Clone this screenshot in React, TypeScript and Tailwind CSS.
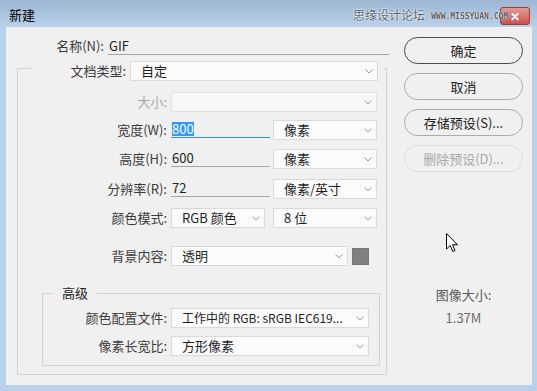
import React from "react";

const FONT = { fontFamily: '"Noto Sans CJK SC", "Noto Sans", sans-serif' };

function Chevron() {
  return (
    <svg width="8" height="5" viewBox="0 0 8 5" className="shrink-0">
      <polyline points="0.5,0.5 4,4 7.5,0.5" fill="none" stroke="#9a9a9a" strokeWidth="1" />
    </svg>
  );
}

function Sel({
  w,
  children,
  disabled,
  tight,
}: {
  w: string;
  children?: React.ReactNode;
  disabled?: boolean;
  tight?: boolean;
}) {
  return (
    <div
      className={`${w} h-[20px] shrink-0 flex items-center justify-between pl-[10px] pr-[4px] border ${
        disabled ? "border-[#e3e3e3] bg-[#f7f7f7]" : "border-[#dadada] bg-[#fbfbfb]"
      } ${tight ? "text-[12px]" : "text-[13px]"} text-[#1e1e1e] leading-[18px] whitespace-nowrap`}
    >
      <span className="whitespace-nowrap leading-[18px]">{children}</span>
      <Chevron />
    </div>
  );
}

function Label({ w, children, disabled }: { w: string; children: React.ReactNode; disabled?: boolean }) {
  return (
    <div
      className={`${w} shrink-0 text-right text-[13px] leading-[20px] whitespace-nowrap ${
        disabled ? "text-[#a8a8a8]" : "text-[#3c3c3c]"
      }`}
    >
      {children}
    </div>
  );
}

function Input({ w, value, focused }: { w: string; value: string; focused?: boolean }) {
  return (
    <div
      className={`${w} h-[18px] shrink-0 border-b ${
        focused ? "border-[#3c8be0]" : "border-[#a5a5a5]"
      } flex items-center pl-[1px] text-[13px] leading-[17px] text-[#1e1e1e]`}
    >
      {focused ? <span className="bg-[#3399ff] text-white leading-[14px]">{value}</span> : <span>{value}</span>}
    </div>
  );
}

function Btn({ children, primary, disabled }: { children: React.ReactNode; primary?: boolean; disabled?: boolean }) {
  return (
    <div
      className={`w-[119px] h-[27px] rounded-full border flex items-center justify-center text-[13px] whitespace-nowrap ${
        primary
          ? "border-[#4a4a4a] text-[#1e1e1e]"
          : disabled
          ? "border-[#dcdcdc] text-[#a8a8a8]"
          : "border-[#ababab] text-[#1e1e1e]"
      }`}
    >
      {children}
    </div>
  );
}

export default function App() {
  return (
    <div className="w-[537px] h-[391px] bg-[#b9d1ea] relative overflow-hidden" style={FONT}>
      {/* title bar */}
      <div className="h-[27px] flex items-center justify-between bg-gradient-to-b from-[#9db7d4] to-[#b8d0e9] pl-[9px] pr-[7px]">
        <div className="text-[13px] text-black pt-[3px]">新建</div>
        <div className="w-[30px] h-[18px] mt-[5px] rounded-[3px] border border-[#9b3b3b] bg-gradient-to-b from-[#e29b96] to-[#c8514d] flex items-center justify-center text-white text-[12px] font-bold leading-none">
          ✕
        </div>
      </div>
      {/* watermark overlay */}
      <div className="absolute left-[353px] top-[7px] flex items-center gap-[6px] pointer-events-none whitespace-nowrap">
        <span className="text-[12px] leading-[16px] text-[#5a6470]" style={{ textShadow: "0 0 2px #fff, 0 0 2px #fff" }}>
          思缘设计论坛
        </span>
        <span
          className="text-[8px] leading-[10px] font-bold text-[#5a5a5a] mt-[3px]"
          style={{ fontFamily: '"DejaVu Sans Mono", monospace', textShadow: "0 0 1px #fff, 0 0 1px #fff" }}
        >
          WWW.MISSYUAN.COM
        </span>
      </div>

      {/* client */}
      <div className="ml-[6px] w-[526px] h-[358px] bg-[#f0f0f0] flex">
        {/* left column */}
        <div className="w-[381px] shrink-0 flex flex-col">
          {/* name row */}
          <div className="mt-[9px] flex items-center">
            <Label w="w-[98px]">名称(N):</Label>
            <div className="ml-[4px]">
              <Input w="w-[281px]" value="GIF" />
            </div>
          </div>

          {/* outer group box */}
          <div className="ml-[11px] mt-[12px] w-[370px] h-[307px] border border-[#d3d3d3] flex flex-col">
            {/* header (doc type) */}
            <div className="-mt-[8px] ml-[13px] mr-[2px] h-[20px] bg-[#f0f0f0] flex items-center">
              <Label w="w-[95px]">文档类型:</Label>
              <div className="ml-[4px]">
                <Sel w="w-[248px]">自定</Sel>
              </div>
            </div>

            {/* size */}
            <div className="mt-[11px] flex items-start">
              <Label w="w-[149px]" disabled>
                大小:
              </Label>
              <div className="ml-[4px]">
                <Sel w="w-[206px]" disabled />
              </div>
            </div>

            {/* width */}
            <div className="mt-[8px] flex items-start">
              <Label w="w-[149px]">宽度(W):</Label>
              <div className="ml-[4px] flex">
                <Input w="w-[99px]" value="800" focused />
                <div className="ml-[3px]">
                  <Sel w="w-[104px]">像素</Sel>
                </div>
              </div>
            </div>

            {/* height */}
            <div className="mt-[9px] flex items-start">
              <Label w="w-[149px]">高度(H):</Label>
              <div className="ml-[4px] flex">
                <Input w="w-[99px]" value="600" />
                <div className="ml-[3px]">
                  <Sel w="w-[104px]">像素</Sel>
                </div>
              </div>
            </div>

            {/* resolution */}
            <div className="mt-[10px] flex items-start">
              <Label w="w-[149px]">分辨率(R):</Label>
              <div className="ml-[4px] flex">
                <Input w="w-[99px]" value="72" />
                <div className="ml-[3px]">
                  <Sel w="w-[104px]">像素/英寸</Sel>
                </div>
              </div>
            </div>

            {/* color mode */}
            <div className="mt-[9px] flex items-start">
              <Label w="w-[149px]">颜色模式:</Label>
              <div className="ml-[4px] flex">
                <Sel w="w-[94px]">RGB 颜色</Sel>
                <div className="ml-[8px]">
                  <Sel w="w-[104px]">8 位</Sel>
                </div>
              </div>
            </div>

            {/* background */}
            <div className="mt-[18px] flex items-start">
              <Label w="w-[149px]">背景内容:</Label>
              <div className="ml-[4px] flex items-center">
                <Sel w="w-[177px]">透明</Sel>
                <div className="ml-[4px] w-[17px] h-[17px] bg-[#808080] border border-[#767676]" />
              </div>
            </div>

            {/* advanced group */}
            <div className="ml-[24px] mt-[27px] w-[338px] h-[73px] border border-[#d3d3d3] flex flex-col">
              <div className="-mt-[10px] ml-[10px] self-start h-[18px] px-[9px] bg-[#f0f0f0] text-[13px] leading-[18px] text-[#1e1e1e]">
                高级
              </div>
              <div className="mt-[6px] flex items-start">
                <Label w="w-[124px]">颜色配置文件:</Label>
                <div className="ml-[4px]">
                  <Sel w="w-[198px]" tight>
                    工作中的 RGB: sRGB IEC619...
                  </Sel>
                </div>
              </div>
              <div className="mt-[8px] flex items-start">
                <Label w="w-[124px]">像素长宽比:</Label>
                <div className="ml-[4px]">
                  <Sel w="w-[198px]">方形像素</Sel>
                </div>
              </div>
            </div>
          </div>
        </div>

        {/* right column */}
        <div className="ml-[17px] mt-[10px] w-[119px] flex flex-col items-center">
          <div className="flex flex-col gap-[9px]">
            <Btn primary>确定</Btn>
            <Btn>取消</Btn>
            <Btn>存储预设(S)...</Btn>
            <Btn disabled>删除预设(D)...</Btn>
          </div>
          <div className="mt-[115px] text-[13px] text-[#5a5a5a] leading-[16px]">图像大小:</div>
          <div className="mt-[7px] text-[13px] text-[#6a6a6a] leading-[16px]">1.37M</div>
        </div>
      </div>

      {/* mouse cursor overlay */}
      <svg className="absolute left-[446px] top-[233px]" width="13" height="20" viewBox="0 0 13 20">
        <path
          d="M0.5,0.5 L0.5,16 L4.2,12.5 L6.8,18.5 L9,17.5 L6.5,11.8 L11.5,11.8 Z"
          fill="#fff"
          stroke="#000"
          strokeWidth="1"
          strokeLinejoin="miter"
        />
      </svg>
    </div>
  );
}
